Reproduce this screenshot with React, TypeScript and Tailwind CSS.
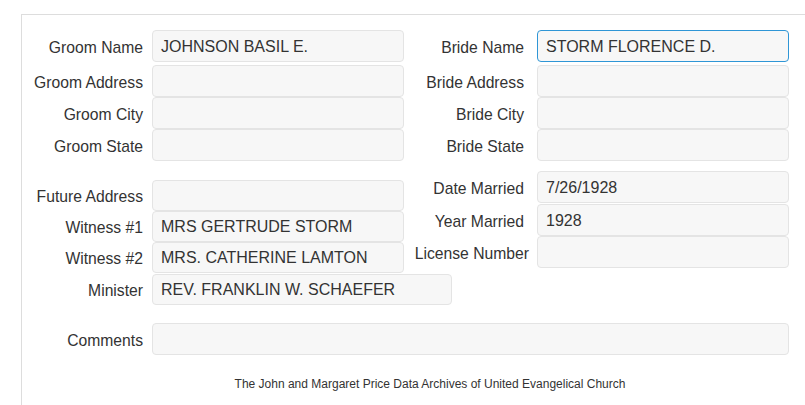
const font = { fontFamily: '"Liberation Sans", Arial, sans-serif' };

function Box({ value, width = "w-[252px]", height = "h-[32px]", focused = false }: { value?: string; width?: string; height?: string; focused?: boolean }) {
  return (
    <div
      className={`${width} ${height} shrink-0 rounded-[4px] border bg-[#f7f7f7] pl-2 pt-[1px] flex items-center text-[16px] text-[#333] ${
        focused ? "border-[#2f96d6]" : "border-[#e4e4e4]"
      }`}
    >
      {value}
    </div>
  );
}

function Field({
  label,
  value,
  labelWidth,
  gap,
  width,
  height,
  focused,
}: {
  label: string;
  value?: string;
  labelWidth: string;
  gap: string;
  width?: string;
  height?: string;
  focused?: boolean;
}) {
  return (
    <div className="flex items-center">
      <div className={`${labelWidth} ${gap} shrink-0 pt-[3px] text-right text-[15.7px] text-[#333] whitespace-nowrap`}>{label}</div>
      <Box value={value} width={width} height={height} focused={focused} />
    </div>
  );
}

export default function App() {
  const L = "w-[121px]";
  const R = "w-[120px]";
  return (
    <div className="h-[405px] w-[805px] overflow-hidden bg-white pt-[14px] pl-[21px]" style={font}>
      <div className="h-[500px] border-l border-t border-[#dddddd]">
        {/* top block */}
        <div className="flex pt-[15px]">
          <div className="flex flex-col">
            <Field label="Groom Name" value="JOHNSON BASIL E." labelWidth={L} gap="mr-[9px]" />
            <div className="h-[3px]" />
            <Field label="Groom Address" labelWidth={L} gap="mr-[9px]" />
            <Field label="Groom City" labelWidth={L} gap="mr-[9px]" />
            <Field label="Groom State" labelWidth={L} gap="mr-[9px]" />
          </div>
          <div className="flex flex-col">
            <Field label="Bride Name" value="STORM FLORENCE D." labelWidth={R} gap="mr-[13px]" focused />
            <div className="h-[3px]" />
            <Field label="Bride Address" labelWidth={R} gap="mr-[13px]" />
            <Field label="Bride City" labelWidth={R} gap="mr-[13px]" />
            <Field label="Bride State" labelWidth={R} gap="mr-[13px]" />
          </div>
        </div>

        {/* lower block */}
        <div className="flex">
          <div className="flex w-[382px] shrink-0 flex-col pt-[19px]">
            <Field label="Future Address" labelWidth={L} gap="mr-[9px]" height="h-[31px]" />
            <Field label="Witness #1" value="MRS GERTRUDE STORM" labelWidth={L} gap="mr-[9px]" height="h-[31px]" />
            <Field label="Witness #2" value="MRS. CATHERINE LAMTON" labelWidth={L} gap="mr-[9px]" height="h-[31px]" />
            <div className="h-[1px]" />
            <Field label="Minister" value="REV. FRANKLIN W. SCHAEFER" labelWidth={L} gap="mr-[9px]" width="w-[300px]" height="h-[31px]" />
          </div>
          <div className="flex flex-col pt-[10px]">
            <Field label="Date Married" value="7/26/1928" labelWidth={R} gap="mr-[13px]" />
            <div className="h-[1px]" />
            <Field label="Year Married" value="1928" labelWidth={R} gap="mr-[13px]" />
            <Field label="License Number" labelWidth="w-[125px]" gap="mr-[8px]" />
          </div>
        </div>

        {/* comments */}
        <div className="mt-[18px]">
          <Field label="Comments" labelWidth={L} gap="mr-[9px]" width="w-[637px]" />
        </div>

        <div className="mt-[20px] w-[816px] text-center text-[12px] text-[#333]">
          The John and Margaret Price Data Archives of United Evangelical Church
        </div>
      </div>
    </div>
  );
}
